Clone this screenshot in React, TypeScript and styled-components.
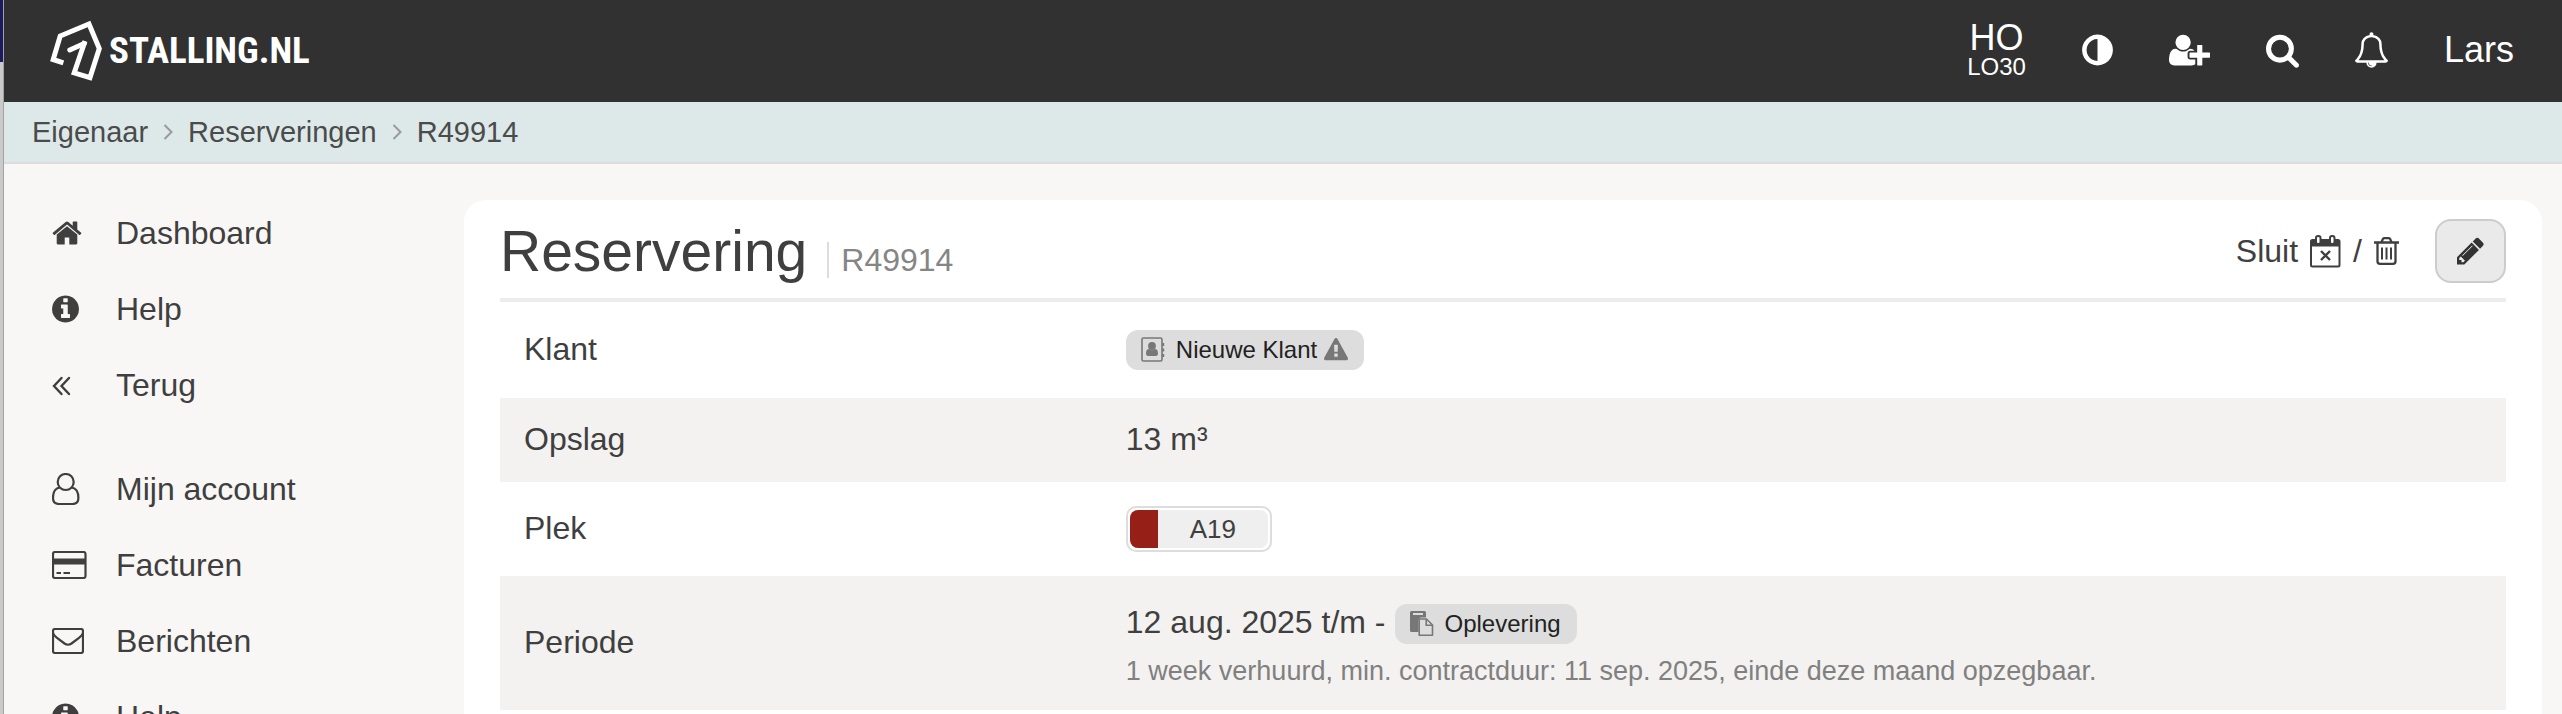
import React from "react";
import styled, { createGlobalStyle } from "styled-components";

const GlobalStyle = createGlobalStyle`
  *, *::before, *::after { box-sizing: border-box; }
  body {
    margin: 0;
    background: #f8f7f5;
    color: #3f3f3f;
    font-family: "Liberation Sans", Arial, Helvetica, sans-serif;
    font-size: 32px;
    line-height: 40px;
  }
  a { color: inherit; text-decoration: none; }
  button { font: inherit; color: inherit; }
`;

/* ---------- icons ---------- */

const Svg = styled.svg<{ $w: number; $h: number }>`
  display: block;
  flex: none;
  width: ${(p) => p.$w}px;
  height: ${(p) => p.$h}px;
`;

const glyphs = {
  home: "M1408 992v480q0 26-19 45t-45 19h-384v-384h-256v384h-384q-26 0-45-19t-19-45v-480q0-1 .5-3t.5-3l575-474 575 474q1 2 1 6zm223-69l-62 74q-8 9-21 11h-3q-13 0-21-7l-692-577-692 577q-12 8-24 7-13-2-21-11l-62-74q-8-10-7-23.5t11-21.5l719-599q32-26 76-26t76 26l244 204v-195q0-14 9-23t23-9h192q14 0 23 9t9 23v408l219 182q10 8 11 21.5t-7 23.5z",
  info: "M1024 1376v-160q0-14-9-23t-23-9h-96v-512q0-14-9-23t-23-9h-320q-14 0-23 9t-9 23v160q0 14 9 23t23 9h96v320h-96q-14 0-23 9t-9 23v160q0 14 9 23t23 9h448q14 0 23-9t9-23zm-128-896v-160q0-14-9-23t-23-9h-192q-14 0-23 9t-9 23v160q0 14 9 23t23 9h192q14 0 23-9t9-23zm640 416q0 209-103 385.5t-279.5 279.5-385.5 103-385.5-103-279.5-279.5-103-385.5 103-385.5 279.5-279.5 385.5-103 385.5 103 279.5 279.5 103 385.5z",
  adjust: "M768 1440v-1088q-148 0-273 73t-198 198-73 273 73 273 198 198 273 73zm768-544q0 209-103 385.5t-279.5 279.5-385.5 103-385.5-103-279.5-279.5-103-385.5 103-385.5 279.5-279.5 385.5-103 385.5 103 279.5 279.5 103 385.5z",
  userPlus: "M704 896q-159 0-271.5-112.5t-112.5-271.5 112.5-271.5 271.5-112.5 271.5 112.5 112.5 271.5-112.5 271.5-271.5 112.5zm960 128h352q13 0 22.5 9.5t9.5 22.5v192q0 13-9.5 22.5t-22.5 9.5h-352v352q0 13-9.5 22.5t-22.5 9.5h-192q-13 0-22.5-9.5t-9.5-22.5v-352h-352q-13 0-22.5-9.5t-9.5-22.5v-192q0-13 9.5-22.5t22.5-9.5h352v-352q0-13 9.5-22.5t22.5-9.5h192q13 0 22.5 9.5t9.5 22.5v352zm-736 224q0 52 38 90t90 38h256v238q-68 50-171 50h-874q-121 0-194-69t-73-190q0-53 3.5-103.5t14-109 26.5-108.5 43-97.5 62-81 85.5-53.5 111.5-20q19 0 39 17 79 61 154.5 91.5t164.5 30.5 164.5-30.5 154.5-91.5q20-17 39-17 132 0 217 96h-223q-52 0-90 38t-38 90v192z",
  search: "M1152 832q0-185-131.5-316.5t-316.5-131.5-316.5 131.5-131.5 316.5 131.5 316.5 316.5 131.5 316.5-131.5 131.5-316.5zm512 832q0 52-38 90t-90 38q-54 0-90-38l-343-342q-179 124-399 124-143 0-273.5-55.5t-225-150-150-225-55.5-273.5 55.5-273.5 150-225 225-150 273.5-55.5 273.5 55.5 225 150 150 225 55.5 273.5q0 220-124 399l343 343q37 37 37 90z",
  bell: "M848 1696q0-16-16-16-59 0-101.5-42.5t-42.5-101.5q0-16-16-16t-16 16q0 73 51.5 124.5t124.5 51.5q16 0 16-16zm-666-288h1300q-266-300-266-832 0-51-24-105t-69-103-121.5-80.5-169.5-31.5-169.5 31.5-121.5 80.5-69 103-24 105q0 532-266 832zm1482 0q0 52-38 90t-90 38h-448q0 106-75 181t-181 75-181-75-75-181h-448q-52 0-90-38t-38-90q50-42 91-88t85-119.5 74.5-158.5 50-206 19.5-260q0-152 117-282.5t307-158.5q-8-19-8-39 0-40 28-68t68-28 68 28 28 68q0 20-8 39 190 28 307 158.5t117 282.5q0 139 19.5 260t50 206 74.5 158.5 85 119.5 91 88z",
  pencil: "M363 1536l91-91-235-235-91 91v107h128v128h107zm523-928q0-22-22-22-10 0-17 7l-542 542q-7 7-7 17 0 22 22 22 10 0 17-7l542-542q7-7 7-17zm-54-192l416 416-832 832h-416v-416zm683 96q0 53-37 90l-166 166-416-416 166-165q36-38 90-38 53 0 91 38l235 234q37 39 37 91z",
  warning: "M1024 1375v-190q0-14-9.5-23.5t-22.5-9.5h-192q-13 0-22.5 9.5t-9.5 23.5v190q0 14 9.5 23.5t22.5 9.5h192q13 0 22.5-9.5t9.5-23.5zm-2-374l18-459q0-12-10-19-13-11-24-11h-220q-11 0-24 11-10 7-10 21l17 457q0 10 10 16.5t24 6.5h185q14 0 23.5-6.5t10.5-16.5zm-14-934l768 1408q35 63-2 126-17 29-46.5 46t-63.5 17h-1536q-34 0-63.5-17t-46.5-46q-37-63-2-126l768-1408q17-31 47-49t65-18 65 18 47 49z",
};

type GlyphProps = { name: keyof typeof glyphs; units: number; w: number; h: number };

const Glyph = ({ name, units, w, h }: GlyphProps) => (
  <Svg $w={w} $h={h} viewBox={`0 0 ${units} 1792`} fill="currentColor" aria-hidden="true">
    <path d={glyphs[name]} />
  </Svg>
);

const DoubleLeft = () => (
  <Svg $w={20} $h={32} viewBox="0 0 20 32" fill="none" stroke="currentColor" strokeWidth="2.400" strokeLinecap="round" aria-hidden="true">
    <path d="M9.500 9 2 17l7.500 8M17 9l-7.500 8 7.500 8" />
  </Svg>
);

const UserOutline = () => (
  <Svg $w={28} $h={32} viewBox="0 0 28 32" fill="none" stroke="currentColor" strokeWidth="2.200" aria-hidden="true">
    <circle cx="13.7" cy="9" r="8" />
    <path d="M7.600 14.500C3 15.300 1 19.500 1 25q0 6 6 6h13.400q6 0 6-6c0-5.500-2-9.700-6.600-10.500" />
  </Svg>
);

const CreditCard = () => (
  <Svg $w={35} $h={28} viewBox="0 0 35 28" fill="none" stroke="currentColor" strokeWidth="2.200" aria-hidden="true">
    <rect x="1" y="1" width="32.500" height="26" rx="2" />
    <path d="M1 10.500h32.500" strokeWidth="6" />
    <path d="M4.500 22h4.500M11.500 22H18" strokeWidth="2" />
  </Svg>
);

const EnvelopeOutline = () => (
  <Svg $w={32} $h={26} viewBox="0 0 32 26" fill="none" stroke="currentColor" strokeWidth="2.200" aria-hidden="true">
    <rect x="1" y="1" width="30" height="24" rx="2" />
    <path d="M1 5c.5 2 2 3.300 4 4.800l7.500 5.700q3.500 2.500 7 0L27 9.800c2-1.500 3.500-2.800 4-4.800" />
  </Svg>
);

const CalendarTimes = () => (
  <Svg $w={31} $h={33} viewBox="0 0 31 33" fill="none" stroke="currentColor" strokeWidth="2" aria-hidden="true">
    <rect x="1" y="5" width="28.500" height="26.500" rx="1.500" />
    <path d="M1 5h28.500v6.500H1z" fill="currentColor" stroke="none" />
    <rect x="6" y="1" width="4.500" height="8" rx="2" fill="#fff" />
    <rect x="20" y="1" width="4.500" height="8" rx="2" fill="#fff" />
    <path d="M11 16l9 9M20 16l-9 9" strokeWidth="2.400" />
  </Svg>
);

const TrashOutline = () => (
  <Svg $w={25} $h={28} viewBox="0 0 25 28" fill="none" stroke="currentColor" strokeWidth="2.300" aria-hidden="true">
    <path d="M0 5.500h25M3.500 5.500v19q0 2.300 2.500 2.300h13q2.500 0 2.500-2.300v-19M7.500 5l1.500-3.200q.4-.6 1.500-.6h4q1.100 0 1.500.6l1.500 3.200" />
    <path d="M8 10.500v12M12.500 10.500v12M17 10.500v12" strokeWidth="2" />
  </Svg>
);

const AddressBook = () => (
  <Svg $w={24} $h={26} viewBox="0 0 24 26" fill="none" stroke="currentColor" strokeWidth="1.600" aria-hidden="true">
    <rect x="1" y="1" width="20" height="23" rx="1.500" />
    <path d="M22.200 6v3M22.200 11.500v3M22.200 17v3" strokeWidth="2" />
    <circle cx="11" cy="9" r="3.900" fill="currentColor" stroke="none" />
    <path d="M5 16.500c0-3 1.200-4.400 3-4.400 1.800 1.500 4.200 1.500 6 0 1.800 0 3 1.400 3 4.400 0 1.600-.8 2.500-2 2.500H7c-1.200 0-2-.9-2-2.500z" fill="currentColor" stroke="none" />
  </Svg>
);

const Paste = () => (
  <Svg $w={24} $h={26} viewBox="0 0 24 26" fill="none" aria-hidden="true">
    <path d="M1.500 0h13q1.500 0 1.500 1.500v5h-4.500q-3 0-3 3V21h-7Q0 21 0 19.500v-18Q0 0 1.500 0z" fill="currentColor" />
    <path d="M3 3h10" stroke="#ddd" strokeWidth="2" />
    <path d="M10 8h6.500l6 6v10.200H9.200V8z" stroke="currentColor" strokeWidth="1.600" strokeLinejoin="round" />
    <path d="M16.200 8v6.200h6.300" stroke="currentColor" strokeWidth="1.600" />
  </Svg>
);

const Chevron = () => (
  <Svg $w={10} $h={16} viewBox="0 0 10 16" fill="none" stroke="#999" strokeWidth="2" aria-hidden="true">
    <path d="M1.500 1l7 7-7 7" />
  </Svg>
);

const LogoMark = () => (
  <Svg $w={54} $h={62} viewBox="49 20 54 62" fill="none" stroke="#fff" strokeWidth="5" strokeLinecap="round" strokeLinejoin="round" aria-hidden="true">
    <path strokeLinecap="square" strokeLinejoin="miter" d="M61 62l-7.800-2.500 7-23.500L89 24l10.300 24.500L90 77.600l-15.800-4.800 10-29.300" />
    <path d="M84.200 43.500L69.800 50" />
  </Svg>
);

/* ---------- layout ---------- */

const Page = styled.div`
  display: flex;
  height: 100vh;
  overflow: hidden;
`;

const WindowEdge = styled.div`
  flex: none;
  width: 4px;
  border-right: 1px solid #a2a2a2;
  background: linear-gradient(#1d1b60 62px, #cacaca 62px);
`;

const Content = styled.div`
  flex: 1;
  min-width: 0;
  display: flex;
  flex-direction: column;
`;

const Header = styled.header`
  flex: none;
  display: flex;
  align-items: center;
  justify-content: space-between;
  height: 102px;
  padding: 0 48px 0 45px;
  background: #313131;
  color: #fff;
`;

const Logo = styled.a`
  display: flex;
  align-items: center;
  gap: 6px;
  font-family: "Roboto Condensed", "Liberation Sans Narrow", "Liberation Sans", sans-serif;
  font-size: 37px;
  font-weight: 700;
`;

const Tools = styled.nav`
  display: flex;
  align-items: center;
  gap: 56px;
  padding-bottom: 2px;
`;

const ToolButton = styled.button`
  display: block;
  padding: 0;
  border: 0;
  background: none;
  font-size: 36px;
  cursor: pointer;
`;

const Location = styled(ToolButton)`
  display: flex;
  flex-direction: column;
  align-items: center;
  padding-bottom: 2px;
  line-height: 36px;
`;

const LocationCode = styled.span`
  font-size: 24px;
  line-height: 22px;
`;

const Breadcrumbs = styled.nav`
  flex: none;
  display: flex;
  align-items: center;
  gap: 15px;
  height: 62px;
  padding: 0 28px;
  border-bottom: 2px solid #dcdcdc;
  background: #dde9e9;
  color: #4b4b4b;
  font-size: 29px;
`;

const Body = styled.div`
  flex: 1;
  display: flex;
  min-height: 0;
`;

const Sidebar = styled.nav`
  flex: none;
  width: 460px;
  padding: 31px 0 0 48px;
`;

const Menu = styled.ul`
  list-style: none;
  margin: 0 0 28px;
  padding: 0;
`;

const MenuLink = styled.a`
  display: flex;
  align-items: center;
  height: 76px;
`;

const MenuIcon = styled.span`
  flex: none;
  width: 64px;
`;

const Card = styled.main`
  flex: 1;
  min-width: 0;
  margin: 36px 20px 0 0;
  padding: 0 36px;
  border-radius: 22px 22px 0 0;
  background: #fff;
`;

const CardHeader = styled.div`
  display: flex;
  align-items: center;
  justify-content: space-between;
  height: 102px;
  padding-top: 4px;
  border-bottom: 4px solid #ececec;
`;

const Heading = styled.div`
  display: flex;
  align-items: baseline;
  gap: 20px;
`;

const Title = styled.h1`
  margin: 0;
  font-size: 57px;
  line-height: 64px;
  font-weight: 400;
`;

const Reference = styled.small`
  padding-left: 12px;
  border-left: 2px solid #ddd;
  color: #858585;
  font-size: 32px;
  line-height: 36px;
`;

const Actions = styled.div`
  display: flex;
  align-items: center;
  gap: 36px;
`;

const CloseActions = styled.div`
  display: flex;
  align-items: center;
  gap: 12px;
`;

const TextButton = styled.button`
  display: flex;
  align-items: center;
  gap: 12px;
  padding: 0;
  border: 0;
  background: none;
  cursor: pointer;
`;

const EditButton = styled.button`
  display: flex;
  align-items: center;
  justify-content: center;
  width: 71px;
  height: 64px;
  padding: 0;
  border: 2px solid #ccc;
  border-radius: 16px;
  background: #eaeaea;
  color: #333;
  cursor: pointer;
`;

const Details = styled.table`
  width: 100%;
  border-collapse: collapse;
  table-layout: fixed;
`;

const Row = styled.tr`
  &:nth-child(even) { background: #f3f2f0; }
`;

const Label = styled.th`
  width: 30%;
  padding: 0 24px 2px;
  font-weight: 400;
  text-align: left;
`;

const Value = styled.td<{ $top: number; $bottom: number }>`
  padding: ${(p) => p.$top}px 24px ${(p) => p.$bottom}px;
`;

const Pill = styled.a`
  display: flex;
  align-items: center;
  gap: 7px;
  width: fit-content;
  height: 40px;
  padding: 0 16px 0 15px;
  border-radius: 12px;
  background: #ddd;
  color: #777;
  font-size: 24px;
`;

const PillText = styled.span`
  padding-left: 4px;
  color: #222;
`;

const Spot = styled.a`
  display: flex;
  width: 146px;
  height: 46px;
  padding: 2px;
  border: 2px solid #ddd;
  border-radius: 10px;
  background: #fff;
  font-size: 26px;
  line-height: 38px;
`;

const SpotColor = styled.span`
  width: 28px;
  border-radius: 8px 0 0 8px;
  background: #961f17;
`;

const SpotName = styled.span`
  flex: 1;
  border-radius: 0 8px 8px 0;
  background: #efefef;
  text-align: center;
`;

const Period = styled.div`
  display: flex;
  align-items: flex-start;
  gap: 9px;
  line-height: 36px;
`;

const Note = styled.div`
  margin-top: 8px;
  color: #808080;
  font-size: 27px;
  line-height: 38px;
`;

const infoIcon = <Glyph name="info" units={1536} w={27} h={32} />;

const menus = [
  [
    { label: "Dashboard", icon: <Glyph name="home" units={1664} w={30} h={32} /> },
    { label: "Help", icon: infoIcon },
    { label: "Terug", icon: <DoubleLeft /> },
  ],
  [
    { label: "Mijn account", icon: <UserOutline /> },
    { label: "Facturen", icon: <CreditCard /> },
    { label: "Berichten", icon: <EnvelopeOutline /> },
    { label: "Help", icon: infoIcon },
  ],
];

export default function App() {
  return (
    <Page>
      <GlobalStyle />
      <WindowEdge />
      <Content>
        <Header>
          <Logo href="#">
            <LogoMark />
            STALLING.NL
          </Logo>
          <Tools aria-label="Hulpmiddelen">
            <Location>
              HO
              <LocationCode>LO30</LocationCode>
            </Location>
            <ToolButton aria-label="Contrast"><Glyph name="adjust" units={1536} w={31} h={36} /></ToolButton>
            <ToolButton aria-label="Klant toevoegen"><Glyph name="userPlus" units={2048} w={41} h={36} /></ToolButton>
            <ToolButton aria-label="Zoeken"><Glyph name="search" units={1664} w={33} h={36} /></ToolButton>
            <ToolButton aria-label="Meldingen"><Glyph name="bell" units={1664} w={33} h={36} /></ToolButton>
            <ToolButton>Lars</ToolButton>
          </Tools>
        </Header>
        <Breadcrumbs aria-label="Kruimelpad">
          <a href="#">Eigenaar</a>
          <Chevron />
          <a href="#">Reserveringen</a>
          <Chevron />
          <a href="#">R49914</a>
        </Breadcrumbs>
        <Body>
          <Sidebar aria-label="Hoofdmenu">
            {menus.map((items, i) => (
              <Menu key={i}>
                {items.map((item) => (
                  <li key={item.label}>
                    <MenuLink href="#">
                      <MenuIcon>{item.icon}</MenuIcon>
                      {item.label}
                    </MenuLink>
                  </li>
                ))}
              </Menu>
            ))}
          </Sidebar>
          <Card>
            <CardHeader>
              <Heading>
                <Title>Reservering</Title>
                <Reference>R49914</Reference>
              </Heading>
              <Actions>
                <CloseActions>
                  <TextButton>Sluit <CalendarTimes /></TextButton>
                  /
                  <TextButton aria-label="Verwijderen"><TrashOutline /></TextButton>
                </CloseActions>
                <EditButton aria-label="Bewerken"><Glyph name="pencil" units={1536} w={27} h={32} /></EditButton>
              </Actions>
            </CardHeader>
            <Details>
              <tbody>
                <Row>
                  <Label scope="row">Klant</Label>
                  <Value $top={28} $bottom={28}>
                    <Pill href="#">
                      <AddressBook />
                      <PillText>Nieuwe Klant</PillText>
                      <Glyph name="warning" units={1792} w={24} h={24} />
                    </Pill>
                  </Value>
                </Row>
                <Row>
                  <Label scope="row">Opslag</Label>
                  <Value $top={21} $bottom={23}>13 m³</Value>
                </Row>
                <Row>
                  <Label scope="row">Plek</Label>
                  <Value $top={24} $bottom={24}>
                    <Spot href="#">
                      <SpotColor />
                      <SpotName>A19</SpotName>
                    </Spot>
                  </Value>
                </Row>
                <Row>
                  <Label scope="row">Periode</Label>
                  <Value $top={28} $bottom={20}>
                    <Period>
                      12 aug. 2025 t/m -
                      <Pill href="#">
                        <Paste />
                        <PillText>Oplevering</PillText>
                      </Pill>
                    </Period>
                    <Note>1 week verhuurd, min. contractduur: 11 sep. 2025, einde deze maand opzegbaar.</Note>
                  </Value>
                </Row>
              </tbody>
            </Details>
          </Card>
        </Body>
      </Content>
    </Page>
  );
}
